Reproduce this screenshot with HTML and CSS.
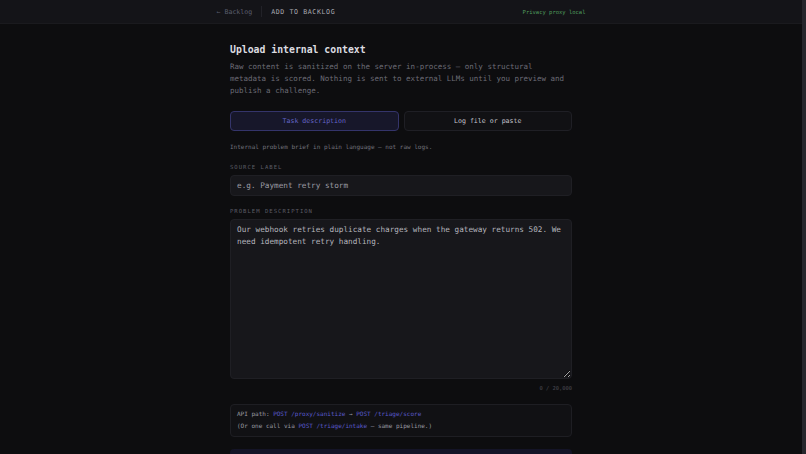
FILE: index.html
```html
<!DOCTYPE html>
<html lang="en">
<head>
    <meta charset="UTF-8">
    <meta name="viewport" content="width=device-width, initial-scale=1.0">
    <title>Add to Backlog</title>
    <link rel="stylesheet" href="styles.css">
</head>
<body>
<div class="page">
    <div class="topbar">
        <div class="topbar-inner">
            <a class="back" href="#">&larr; Backlog</a>
            <span class="divider"></span>
            <span class="page-title">ADD TO BACKLOG</span>
            <span class="privacy">Privacy proxy local</span>
        </div>
    </div>
    <div class="main">
        <h1>Upload internal context</h1>
        <p class="lead">Raw content is sanitized on the server in-process — only structural metadata is scored. Nothing is sent to external LLMs until you preview and publish a challenge.</p>

        <div class="tabs">
            <button class="tab active">Task description</button>
            <button class="tab">Log file or paste</button>
        </div>
        <p class="hint">Internal problem brief in plain language — not raw logs.</p>

        <label class="field-label" for="source">SOURCE LABEL</label>
        <input id="source" class="text-input" type="text" placeholder="e.g. Payment retry storm">

        <label class="field-label" for="problem">PROBLEM DESCRIPTION</label>
        <textarea id="problem" class="text-area">Our webhook retries duplicate charges when the gateway returns 502. We need idempotent retry handling.</textarea>
        <div class="counter">0 / 20,000</div>

        <div class="api-box">
            <div>API path: <code>POST /proxy/sanitize</code> &rarr; <code>POST /triage/score</code></div>
            <div>(Or one call via <code>POST /triage/intake</code> — same pipeline.)</div>
        </div>

        <div class="submit-panel"></div>
    </div>
</div>
</body>
</html>
```

FILE: styles.css
```css
html, body {
    height: 100%;
    overflow: hidden;
}
body {
    margin: 0;
    font-family: "DejaVu Sans Mono", "Liberation Mono", monospace;
    background: #0d0d0f;
    color: #c4c4cc;
}
.page {
    height: 100%;
    overflow-y: auto;
    box-sizing: border-box;
    border-right: 4px solid #26262c;
}
.page::-webkit-scrollbar {
    width: 0;
}
.topbar {
    height: 24px;
    background: #141418;
    border-bottom: 1px solid #1a1a1e;
    box-sizing: border-box;
}
.topbar-inner {
    max-width: 369px;
    height: 100%;
    margin: 0 auto;
    display: flex;
    align-items: center;
}
.back {
    color: #5a5e6c;
    font-size: 6.6px;
    text-decoration: none;
}
.divider {
    width: 1px;
    height: 11px;
    background: #222228;
    margin: 0 9px;
}
.page-title {
    color: #a8a8b0;
    font-size: 6.6px;
    letter-spacing: 0.6px;
}
.privacy {
    margin-left: auto;
    color: #4f9a5c;
    font-size: 5.5px;
}
.main {
    width: 342px;
    margin: 0 auto;
    padding: 19px 0 10px;
}
h1 {
    margin: 0 0 4px;
    font-size: 9.8px;
    line-height: 14px;
    font-weight: bold;
    color: #dcdce0;
}
.lead {
    margin: 0;
    font-size: 7.5px;
    line-height: 12px;
    color: #6c6c76;
}
.tabs {
    display: flex;
    gap: 5px;
    margin-top: 14px;
}
.tab {
    flex: 1;
    height: 20px;
    border: 1px solid #1f1f25;
    border-radius: 4px;
    background: #111114;
    color: #c4c4cc;
    font-family: inherit;
    font-size: 6.6px;
    padding: 0;
}
.tab.active {
    background: #17172a;
    border-color: #34346a;
    color: #6464c8;
}
.hint {
    margin: 11px 0 0;
    font-size: 6px;
    line-height: 10px;
    color: #72727b;
}
.field-label {
    display: block;
    margin-top: 10px;
    font-size: 5.6px;
    line-height: 10px;
    letter-spacing: 1px;
    color: #5c5c65;
}
.text-input,
.text-area {
    display: block;
    width: 100%;
    box-sizing: border-box;
    margin-top: 3px;
    background: #17171b;
    border: 1px solid #1f1f24;
    border-radius: 4px;
    font-family: inherit;
    font-size: 7.7px;
    color: #b4b4bc;
    outline: none;
}
.text-input {
    height: 21px;
    padding: 0 6px;
}
.text-input::placeholder {
    color: #9c9ca4;
}
.text-area {
    height: 160px;
    padding: 4px 6px;
    line-height: 12px;
    resize: vertical;
}
.counter {
    margin-top: 5px;
    text-align: right;
    font-size: 5.4px;
    line-height: 8px;
    color: #4a4a52;
}
.api-box {
    margin-top: 12px;
    padding: 3px 6px 4px;
    background: #111114;
    border: 1px solid #1e1e23;
    border-radius: 4px;
    font-size: 6px;
    line-height: 12px;
    color: #9a9aa2;
}
.api-box code {
    font-family: inherit;
    color: #5a5acc;
}
.submit-panel {
    margin-top: 12px;
    height: 30px;
    background: #141427;
    border-radius: 4px;
}
```
